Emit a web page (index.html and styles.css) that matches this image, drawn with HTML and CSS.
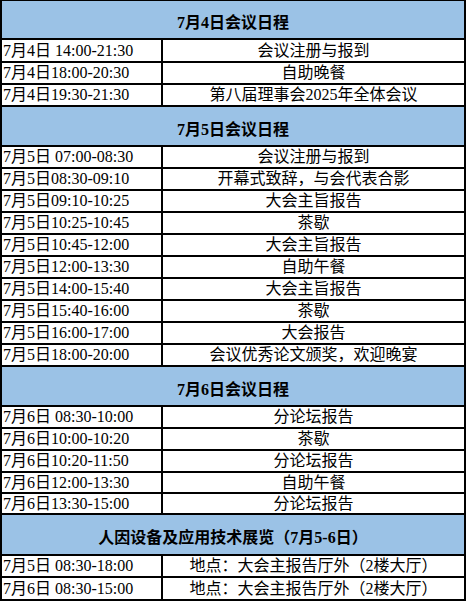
FILE: index.html
```html
<!DOCTYPE html>
<html lang="zh-CN">
<head>
<meta charset="utf-8">
<title>会议日程</title>
<link rel="stylesheet" href="styles.css">
</head>
<body>
<div class="schedule">
  <div class="head first">7月4日会议日程</div>
  <div class="time tall">7月4日 14:00-21:30</div><div class="event tall">会议注册与报到</div>
  <div class="time">7月4日18:00-20:30</div><div class="event">自助晚餐</div>
  <div class="time">7月4日19:30-21:30</div><div class="event">第八届理事会2025年全体会议</div>

  <div class="head">7月5日会议日程</div>
  <div class="time">7月5日 07:00-08:30</div><div class="event">会议注册与报到</div>
  <div class="time">7月5日08:30-09:10</div><div class="event">开幕式致辞，与会代表合影</div>
  <div class="time">7月5日09:10-10:25</div><div class="event">大会主旨报告</div>
  <div class="time">7月5日10:25-10:45</div><div class="event">茶歇</div>
  <div class="time">7月5日10:45-12:00</div><div class="event">大会主旨报告</div>
  <div class="time">7月5日12:00-13:30</div><div class="event">自助午餐</div>
  <div class="time">7月5日14:00-15:40</div><div class="event">大会主旨报告</div>
  <div class="time">7月5日15:40-16:00</div><div class="event">茶歇</div>
  <div class="time">7月5日16:00-17:00</div><div class="event">大会报告</div>
  <div class="time">7月5日18:00-20:00</div><div class="event">会议优秀论文颁奖，欢迎晚宴</div>

  <div class="head">7月6日会议日程</div>
  <div class="time">7月6日 08:30-10:00</div><div class="event">分论坛报告</div>
  <div class="time">7月6日10:00-10:20</div><div class="event">茶歇</div>
  <div class="time">7月6日10:20-11:50</div><div class="event">分论坛报告</div>
  <div class="time short">7月6日12:00-13:30</div><div class="event short">自助午餐</div>
  <div class="time short">7月6日13:30-15:00</div><div class="event short">分论坛报告</div>

  <div class="head wide">人因设备及应用技术展览（7月5-6日）</div>
  <div class="time">7月5日 08:30-18:00</div><div class="event">地点：大会主报告厅外（2楼大厅）</div>
  <div class="time tall">7月6日 08:30-15:00</div><div class="event tall">地点：大会主报告厅外（2楼大厅）</div>
</div>
</body>
</html>
```
FILE: styles.css
```css
html, body {
  margin: 0;
  padding: 0;
  background: #ffffff;
}

.schedule {
  box-sizing: border-box;
  width: 466px;
  display: grid;
  grid-template-columns: 161px 303px;
  border-left: 2px solid #000;
  border-top: 1px solid #000;
  font-family: "Liberation Serif", "Noto Sans CJK SC", serif;
  font-size: 16px;
  color: #000;
}

.head, .time, .event {
  box-sizing: border-box;
  border-right: 2px solid #000;
  border-bottom: 2px solid #000;
  display: flex;
  align-items: center;
  white-space: nowrap;
}

.head {
  grid-column: 1 / span 2;
  height: 40px;
  justify-content: center;
  background: #9bc2e6;
  font-weight: bold;
  padding-top: 3px;
}

.head.first {
  height: 39px;
}

.head.wide {
  height: 41px;
}

.time {
  height: 22px;
  line-height: 20px;
  padding-left: 1px;
}

.event {
  height: 22px;
  line-height: 20px;
  justify-content: center;
}

.time.tall, .event.tall {
  height: 23px;
}

.time.short, .event.short {
  height: 21px;
}
```
